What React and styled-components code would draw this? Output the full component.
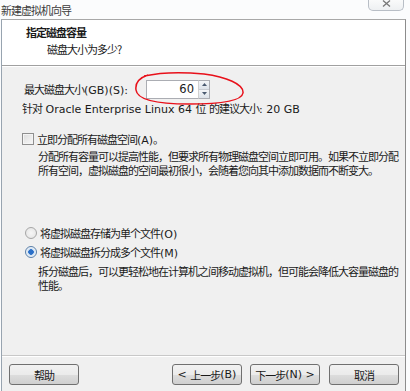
import styled, { createGlobalStyle } from "styled-components"

const Global = createGlobalStyle`
  html, body { margin: 0; padding: 0; background: #fff; }
  body {
    width: 410px;
    height: 391px;
    overflow: hidden;
    font-family: "Noto Sans CJK SC", "DejaVu Sans", sans-serif;
    font-size: 11px;
    letter-spacing: -1px;
    color: #1a1a1a;
  }
`;

const Window = styled.div`
  width: 410px;
  height: 391px;
  display: flex;
  flex-direction: column;
  position: relative;
  background: #fbfcfd;
`;

const TitleBar = styled.div`
  height: 19px;
  display: flex;
  align-items: center;
  padding-left: 1px;
  color: #3a3a3a;
`;

const CloseBtn = styled.div`
  position: absolute;
  top: -3px;
  right: 6px;
  width: 36px;
  height: 14px;
  border: 1px solid #b8bec6;
  border-top: none;
  border-radius: 0 0 5px 5px;
  background: linear-gradient(#fdfdfd, #eef0f2);
  display: flex;
  align-items: flex-end;
  justify-content: center;
  padding-bottom: 3px;
  box-sizing: border-box;
`;

const Frame = styled.div`
  flex: 1;
  width: 403px;
  margin-left: 1px;
  border-left: 1px solid #98a4b0;
  border-right: 1px solid #8c8c8c;
  border-top: 1px solid #a8a8a8;
  background: #f0f0f0;
  display: flex;
  flex-direction: column;
`;

const Header = styled.div`
  height: 46px;
  background: #fff;
  border-bottom: 1px solid #a0a0a0;
  box-shadow: 0 1px 0 #fff;
  padding: 4px 0 0 24px;
  box-sizing: border-box;
`;

const HeadTitle = styled.div`
  font-weight: bold;
  line-height: 17px;
`;

const HeadSub = styled.div`
  padding-left: 21px;
  line-height: 16px;
`;

const Body = styled.div`
  flex: 1;
  padding: 13px 0 0 20px;
  display: flex;
  flex-direction: column;
`;

const SizeRow = styled.div`
  display: flex;
  align-items: center;
  height: 20px;
  position: relative;
`;

const Label = styled.div`
  width: 122px;
  padding-left: 2px;
`;

const SpinBox = styled.div`
  display: flex;
  height: 19px;
`;

const Input = styled.div`
  width: 47px;
  border: 1px solid #abadb3;
  border-right: none;
  background: #fff;
  text-align: right;
  padding-right: 4px;
  line-height: 17px;
  font-family: "DejaVu Sans", sans-serif;
  font-size: 11.5px;
  letter-spacing: 0;
`;

const Spin = styled.div`
  width: 10px;
  display: flex;
  flex-direction: column;
  border: 1px solid #abadb3;
  border-left-color: #d0d0d0;
`;

const SpinHalf = styled.div`
  flex: 1;
  background: linear-gradient(#f4f6f8, #dde3ea);
  display: flex;
  align-items: center;
  justify-content: center;
  & + & { border-top: 1px solid #c8ccd2; }
`;

const Ellipse = styled.svg`
  position: absolute;
  left: 112px;
  top: -8px;
  pointer-events: none;
`;

const Hint = styled.div`
  margin-top: 1px;
  line-height: 16px;
`;

const Latin = styled.span`
  font-family: "DejaVu Sans", sans-serif;
  font-size: 11px;
  letter-spacing: 0;
  white-space: pre;
`;

const OptionRow = styled.div`
  display: flex;
  align-items: center;
  gap: 3px;
  margin-top: ${(p) => p.$top}px;
  padding-left: ${(p) => p.$indent || 0}px;
  height: 16px;
`;

const Check = styled.span`
  width: 10px;
  height: 10px;
  border: 1px solid #8f8f8f;
  background: linear-gradient(135deg, #dcdcdc, #f8f8f8);
  box-shadow: inset 0 0 0 1px #f4f4f4;
`;

const Radio = styled.span`
  width: 10px;
  height: 10px;
  border-radius: 50%;
  border: 1px solid ${(p) => (p.$on ? "#5a7fa8" : "#a6a6a6")};
  background: ${(p) =>
    p.$on
      ? "radial-gradient(circle, #2a6fc8 0 2.5px, #cfe0f2 3px, #eef3f8 5px)"
      : "radial-gradient(circle, #f6f6f6, #e2e2e2)"};
`;

const Para = styled.div`
  margin-top: ${(p) => p.$top}px;
  padding-left: 16px;
  line-height: 14px;
  white-space: nowrap;
`;

const Footer = styled.div`
  height: 36px;
  border-top: 1px solid #c8c8c8;
  box-shadow: inset 0 1px 0 #fff;
  display: flex;
  align-items: flex-start;
  padding: 8px 6px 0 7px;
  box-sizing: border-box;
`;

const Button = styled.div`
  width: 68px;
  height: 19px;
  border: 1px solid #707070;
  border-radius: 3px;
  background: linear-gradient(#f2f2f2 0%, #ebebeb 50%, #dddddd 51%, #cfcfcf 100%);
  display: flex;
  align-items: center;
  justify-content: center;
  margin-left: ${(p) => p.$gap || 0}px;
`;

const Spacer = styled.div`
  flex: 1;
`;

export default function App() {
  return (
    <Window>
      <Global />
      <TitleBar>新建虚拟机向导</TitleBar>
      <CloseBtn>
        <svg width="9" height="7" viewBox="0 0 9 7">
          <path d="M1 0.5 L8 6.5 M8 0.5 L1 6.5" stroke="#777" strokeWidth="1.3" />
        </svg>
      </CloseBtn>
      <Frame>
        <Header>
          <HeadTitle>指定磁盘容量</HeadTitle>
          <HeadSub>磁盘大小为多少?</HeadSub>
        </Header>
        <Body>
          <SizeRow>
            <Label>
              最大磁盘大小<Latin>(GB)(S):</Latin>
            </Label>
            <SpinBox>
              <Input>60</Input>
              <Spin>
                <SpinHalf>
                  <svg width="5" height="3" viewBox="0 0 5 3"><path d="M0 3 L2.5 0 L5 3Z" fill="#4a5a70" /></svg>
                </SpinHalf>
                <SpinHalf>
                  <svg width="5" height="3" viewBox="0 0 5 3"><path d="M0 0 L2.5 3 L5 0Z" fill="#4a5a70" /></svg>
                </SpinHalf>
              </Spin>
            </SpinBox>
            <Ellipse width="112" height="36" viewBox="0 0 112 36">
              <path
                d="M14 4 C5 7 1 12 2 19 C3 28 20 33 55 33 C90 33 108 29 109 22 C110 13 92 6 70 3 C50 1 28 1 10 5"
                fill="none"
                stroke="#e8101a"
                strokeWidth="1.5"
              />
            </Ellipse>
          </SizeRow>
          <Hint>
            针对<Latin> Oracle Enterprise Linux 64 </Latin>位<Latin> </Latin>的建议大小<Latin>: 20 GB</Latin>
          </Hint>
          <OptionRow $top={13}>
            <Check />
            <span>
              立即分配所有磁盘空间<Latin>(A)</Latin>。
            </span>
          </OptionRow>
          <Para $top={2}>
            分配所有容量可以提高性能，但要求所有物理磁盘空间立即可用。如果不立即分配
            <br />
            所有空间，虚拟磁盘的空间最初很小，会随着您向其中添加数据而不断变大。
          </Para>
          <OptionRow $top={48} $indent={3}>
            <Radio />
            <span>
              将虚拟磁盘存储为单个文件<Latin>(O)</Latin>
            </span>
          </OptionRow>
          <OptionRow $top={3} $indent={3}>
            <Radio $on />
            <span>
              将虚拟磁盘拆分成多个文件<Latin>(M)</Latin>
            </span>
          </OptionRow>
          <Para $top={4}>
            拆分磁盘后，可以更轻松地在计算机之间移动虚拟机，但可能会降低大容量磁盘的
            <br />
            性能。
          </Para>
        </Body>
        <Footer>
          <Button>帮助</Button>
          <Spacer />
          <Button>
            <Latin>&lt; </Latin>上一步<Latin>(B)</Latin>
          </Button>
          <Button $gap={8}>
            下一步<Latin>(N) &gt;</Latin>
          </Button>
          <Button $gap={9}>取消</Button>
        </Footer>
      </Frame>
    </Window>
  );
}
